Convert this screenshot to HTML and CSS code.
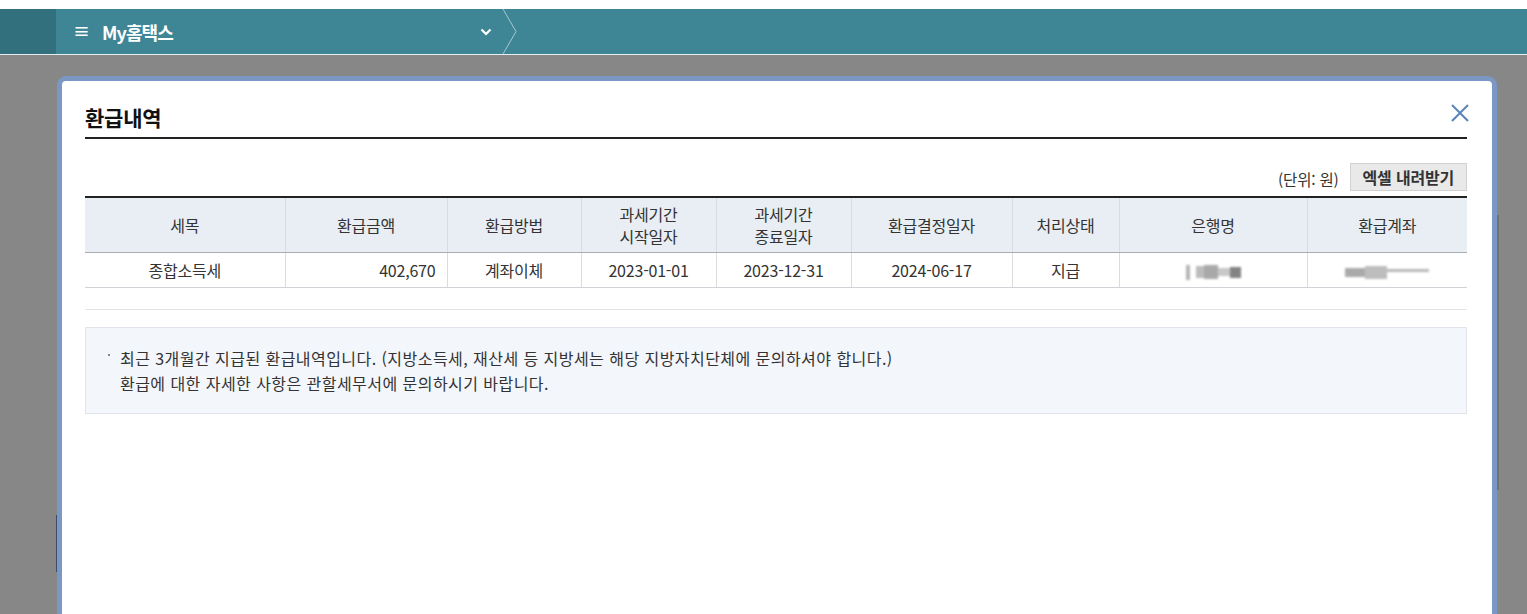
FILE: index.html
```html
<!DOCTYPE html>
<html lang="ko">
<head>
<meta charset="utf-8">
<title>환급내역</title>
<link rel="stylesheet" href="styles.css">
</head>
<body>
<div class="topstrip"></div>
<nav class="gnb">
  <div class="gnb-home"></div>
  <div class="gnb-menu">
    <span class="burger">≡</span>
    <span class="gnb-title">My홈택스</span>
    <svg class="caret" width="12" height="8" viewBox="0 0 12 8"><path d="M1.5 1.5 L6 6 L10.5 1.5" fill="none" stroke="#fff" stroke-width="2.2"/></svg>
  </div>
  <svg class="crumb" width="16" height="45" viewBox="0 0 16 45"><path d="M1 0 L14 22.5 L1 45" fill="none" stroke="#a9c8cf" stroke-width="1"/></svg>
</nav>
<div class="overlay">
  <div class="modal">
    <button class="close" aria-label="닫기"><svg width="20" height="20" viewBox="0 0 20 20"><path d="M2 2 L18 18 M18 2 L2 18" stroke="#5b85b8" stroke-width="2" fill="none"/></svg></button>
    <h2 class="title">환급내역</h2>
    <div class="toolbar">
      <span class="unit">(단위: 원)</span>
      <button class="btn">엑셀 내려받기</button>
    </div>
    <div class="table-wrap">
      <table class="grid">
        <colgroup>
          <col style="width:200px"><col style="width:162px"><col style="width:134px"><col style="width:135px"><col style="width:135px"><col style="width:161px"><col style="width:107px"><col style="width:188px"><col style="width:160px">
        </colgroup>
        <thead>
          <tr>
            <th>세목</th><th>환급금액</th><th>환급방법</th>
            <th><span class="l">과세기간</span><span class="l">시작일자</span></th>
            <th><span class="l">과세기간</span><span class="l">종료일자</span></th>
            <th>환급결정일자</th><th>처리상태</th><th>은행명</th><th>환급계좌</th>
          </tr>
        </thead>
        <tbody>
          <tr>
            <td>종합소득세</td><td class="num">402,670</td><td>계좌이체</td><td>2023-01-01</td><td>2023-12-31</td><td>2024-06-17</td><td>지급</td>
            <td><span class="blur bank"><i class="b1"></i><i class="b2"></i><i class="b3"></i><i class="b4"></i><i class="b5"></i></span></td>
            <td><span class="blur acct"><i class="a1"></i><i class="a2"></i><i class="a3"></i></span></td>
          </tr>
        </tbody>
      </table>
    </div>
    <div class="info">
      <p class="bullet">최근 3개월간 지급된 환급내역입니다. (지방소득세, 재산세 등 지방세는 해당 지방자치단체에 문의하셔야 합니다.)</p>
      <p>환급에 대한 자세한 사항은 관할세무서에 문의하시기 바랍니다.</p>
    </div>
  </div>
</div>
</body>
</html>
```
FILE: styles.css
```css
* { box-sizing: border-box; }
html, body { margin: 0; height: 100%; overflow: hidden; }
body {
  font-family: "Noto Sans CJK KR", "Noto Sans", sans-serif;
  color: #333;
  background: #878787;
  display: flex;
  flex-direction: column;
}
.topstrip { height: 9px; background: #fff; flex: none; }
.gnb {
  height: 46px;
  flex: none;
  display: flex;
  align-items: stretch;
  background: #3e8695;
  border-bottom: 1px solid #e6eef0;
}
.gnb-home { width: 56px; background: #33707d; }
.gnb-menu {
  width: 446px;
  display: flex;
  align-items: center;
  padding-left: 17px;
  color: #fff;
}
.burger { font-size: 17px; font-weight: 700; width: 29px; margin-top: -2px; }
.gnb-title { font-size: 18px; font-weight: 700; letter-spacing: -0.9px; flex: 1; }
.caret { margin-right: 10px; }
.crumb { display: block; }
.overlay {
  flex: 1;
  padding: 21px 30px 0 57px;
  min-height: 0;
}
.modal {
  position: relative;
  height: 600px;
  background: #fff;
  border: 5px solid #7b97c3;
  border-bottom: 0;
  border-radius: 9px 9px 0 0;
  padding: 0 25px 0 23px;
}
.modal::before {
  content: "";
  position: absolute;
  left: -6px;
  top: 434px;
  width: 1px;
  height: 57px;
  background: #3f4d6a;
}
.modal::after {
  content: "";
  position: absolute;
  right: -7px;
  top: 134px;
  width: 2px;
  height: 275px;
  background: #727272;
}
.close {
  position: absolute;
  top: 22px;
  right: 22px;
  border: 0;
  background: none;
  padding: 0;
  width: 20px;
  height: 20px;
}
.title {
  margin: 0;
  padding: 22px 0 6px;
  font-size: 21px;
  line-height: 28px;
  font-weight: 700;
  color: #111;
  letter-spacing: -0.2px;
  border-bottom: 2px solid #222;
}
.toolbar {
  display: flex;
  justify-content: flex-end;
  align-items: center;
  gap: 11px;
  margin-top: 24px;
  height: 28px;
}
.unit { font-size: 15.5px; color: #333; letter-spacing: -0.2px; margin-top: 4px; }
.btn {
  font-family: inherit;
  font-size: 16px;
  font-weight: 700;
  color: #333;
  height: 28px;
  padding: 0 12px;
  background: #e9e9e9;
  border: 1px solid #d2d2d2;
  letter-spacing: -0.2px;
}
.table-wrap {
  margin-top: 5px;
  border-top: 2px solid #222;
  border-bottom: 1px solid #e3e3e3;
  padding-bottom: 21px;
}
.grid {
  width: 100%;
  border-collapse: collapse;
  table-layout: fixed;
  font-size: 16px;
  letter-spacing: -0.2px;
}
.grid th {
  background: #e9edf4;
  font-weight: 400;
  color: #333;
  height: 54px;
  line-height: 22px;
  border-right: 1px solid #d7dce3;
  border-bottom: 1px solid #a9acb0;
  padding: 0;
}
.grid th .l { display: block; }
.grid td {
  height: 35px;
  text-align: center;
  color: #333;
  border-right: 1px solid #dcdcdc;
  border-bottom: 1px solid #cfd3d8;
  padding: 0 11px;
}
.grid th:last-child, .grid td:last-child { border-right: 0; }
.grid td.num { text-align: right; }
.blur { display: inline-flex; align-items: center; filter: blur(1.3px); vertical-align: middle; }
.blur i { display: block; height: 10px; background: #9a9a9a; }
.bank .b1 { width: 4px; background: #b5b5b5; margin-right: 6px; height: 15px; }
.bank .b2 { width: 8px; background: #bcbcbc; height: 12px; }
.bank .b3 { width: 14px; background: #a9a9a9; height: 14px; }
.bank .b4 { width: 12px; background: #c8c8c8; height: 8px; }
.bank .b5 { width: 11px; background: #838383; height: 11px; }
.acct .a1 { width: 20px; background: #aaa; height: 9px; }
.acct .a2 { width: 22px; background: #bdbdbd; height: 13px; }
.acct .a3 { width: 42px; background: #b8b8b8; height: 3px; margin-top: -3px; }
.info {
  margin-top: 17px;
  background: #f3f6fb;
  border: 1px solid #e0e4ea;
  padding: 18px 20px 17px 34px;
  font-size: 16px;
  line-height: 25px;
  letter-spacing: 0.45px;
  color: #333;
}
.info p { margin: 0; }
.bullet { position: relative; }
.bullet::before {
  content: "";
  position: absolute;
  left: -12px;
  top: 8px;
  width: 2px;
  height: 2px;
  background: #888;
}
```
